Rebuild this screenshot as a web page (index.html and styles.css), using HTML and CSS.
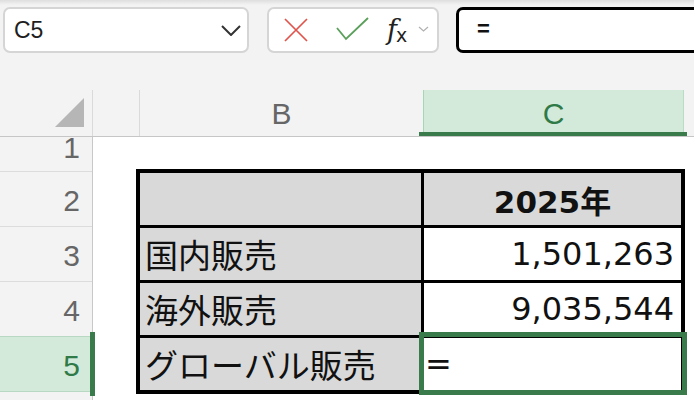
FILE: index.html
```html
<!DOCTYPE html>
<html lang="ja">
<head>
<meta charset="utf-8">
<link rel="stylesheet" href="styles.css">
</head>
<body>
<div class="toolbar">
  <div class="namebox">
    <span class="ref">C5</span>
    <svg class="chev" width="20" height="11" viewBox="0 0 20 11"><polyline points="1,1 10,10 19,1" fill="none" stroke="#333" stroke-width="2"/></svg>
  </div>
  <div class="fnbox">
    <svg class="icon-x" width="24" height="24" viewBox="0 0 24 24"><path d="M1 1 L23 23 M23 1 L1 23" stroke="#e0544c" stroke-width="1.7" fill="none"/></svg>
    <svg class="icon-ok" width="33" height="24" viewBox="0 0 33 24"><polyline points="1,11 10,22 32,1" fill="none" stroke="#5a9f5a" stroke-width="1.8"/></svg>
    <span class="fx"><i>f</i><span class="fx-x">x</span></span>
    <svg class="chev-sm" width="11" height="6" viewBox="0 0 11 6"><polyline points="1,1 5.5,5 10,1" fill="none" stroke="#b0b0b0" stroke-width="1.2"/></svg>
  </div>
  <div class="formula">=</div>
</div>
<div class="colheads">
  <div class="corner"><svg width="29" height="29" viewBox="0 0 29 29"><polygon points="29,0 29,29 0,29" fill="#b6b6b6"/></svg></div>
  <div class="colhead col-a"></div>
  <div class="colhead col-b">B</div>
  <div class="colhead col-c">C<span class="selbar"></span></div>
  <div class="colhead col-rest"></div>
</div>
<div class="sheet">
  <div class="rowheads">
    <div class="rowhead row-1">1</div>
    <div class="rowhead">2</div>
    <div class="rowhead">3</div>
    <div class="rowhead row-4">4</div>
    <div class="rowhead row-sel">5<span class="rowbar"></span></div>
  </div>
  <div class="cells">
    <div class="table">
      <div class="cell label"></div>
      <div class="cell year">2025年</div>
      <div class="cell label">国内販売</div>
      <div class="cell num">1,501,263</div>
      <div class="cell label">海外販売</div>
      <div class="cell num">9,035,544</div>
      <div class="cell label">グローバル販売</div>
      <div class="cell active">=<span class="selection"></span></div>
    </div>
  </div>
</div>
</body>
</html>
```
FILE: styles.css
```css
* { box-sizing: border-box; }
html, body { margin: 0; padding: 0; }
body {
  width: 694px;
  height: 400px;
  overflow: hidden;
  background: #f3f3f3;
  font-family: "Liberation Sans", Arial, sans-serif;
}
.toolbar {
  height: 90px;
  padding: 7px 0 0 3px;
  display: flex;
  align-items: flex-start;
  background: linear-gradient(#dedede, #f3f3f3 5px);
}
.namebox {
  width: 246px;
  height: 46px;
  flex: none;
  background: #fff;
  border: 2px solid #d5d5d5;
  border-radius: 7px;
  display: flex;
  align-items: center;
  justify-content: space-between;
  padding: 0 6px 0 9px;
}
.ref {
  font-size: 23px;
  color: #1e1e1e;
}
.chev { margin-top: 1px; }
.fnbox {
  margin-left: 18px;
  width: 172px;
  height: 46px;
  flex: none;
  background: #fff;
  border: 2px solid #d5d5d5;
  border-radius: 7px;
  display: flex;
  align-items: center;
  padding-left: 15px;
}
.icon-ok { margin-left: 28px; margin-top: -3px; }
.fx {
  margin-left: 18px;
  font-family: "DejaVu Serif", serif;
  color: #222;
  display: flex;
  align-items: baseline;
  line-height: 1;
  margin-top: -2px;
}
.fx i { font-size: 27px; font-style: italic; }
.fx-x { font-size: 19px; font-family: "DejaVu Sans", sans-serif; margin-left: -1px; position: relative; top: 3px; }
.chev-sm { margin-left: 11px; margin-top: -2px; }
.formula {
  margin-left: 17px;
  width: 260px;
  height: 46px;
  flex: none;
  background: #fff;
  border: 3px solid #000;
  border-radius: 7px;
  padding-left: 18px;
  font-size: 22px;
  line-height: 38px;
  color: #111;
  font-weight: bold;
}
.colheads {
  height: 47px;
  display: flex;
  border-bottom: 1px solid #c6c6c6;
}
.corner {
  width: 93px;
  flex: none;
  border-right: 1px solid #dadada;
  display: flex;
  justify-content: flex-end;
  align-items: flex-end;
  padding: 0 8px 9px 0;
}
.colhead {
  flex: none;
  font-size: 30px;
  color: #666;
  text-align: center;
  line-height: 47px;
}
.col-a { width: 47px; border-right: 1px solid #dadada; }
.col-b { width: 283px; }
.col-c {
  width: 261px;
  position: relative;
  background: #d3eadb;
  border-left: 1px solid #a9d5b7;
  border-right: 1px solid #b9dcc4;
  color: #2f7a47;
}
.col-rest { flex: 1; }
.selbar {
  position: absolute;
  left: -5px;
  right: -4px;
  bottom: 0;
  height: 4px;
  background: #3a7b4b;
}
.sheet {
  display: flex;
  height: 263px;
}
.rowheads {
  width: 93px;
  flex: none;
  border-right: 1px solid #c8c8c8;
}
.rowhead {
  height: 55px;
  border-bottom: 1px solid #dcdcdc;
  text-align: right;
  padding: 4px 12px 0 0;
  font-size: 30px;
  line-height: 50px;
  color: #666;
  position: relative;
}
.row-1 {
  height: 35px;
  padding: 0 12px 0 0;
  line-height: 21px;
}
.row-4 { border-bottom-color: #b9d8c3; }
.row-sel {
  background: #d3eadb;
  color: #2f7a47;
  border-bottom-color: #b9d8c3;
}
.rowbar {
  position: absolute;
  right: -3px;
  top: -5px;
  bottom: -5px;
  width: 5px;
  background: #3a7b4b;
}
.cells {
  flex: 1;
  background: #fff;
  padding: 32px 0 0 43px;
}
.table {
  display: inline-grid;
  grid-template-columns: 281px 257px;
  grid-template-rows: repeat(4, 52px);
  gap: 3px;
  background: #000;
  border: 4px solid #000;
  font-family: "DejaVu Sans", "Noto Sans CJK JP", sans-serif;
  font-size: 32px;
  color: #111;
}
.cell {
  background: #d9d9d9;
  display: flex;
  align-items: center;
  white-space: nowrap;
}
.label { padding-left: 5px; font-size: 33px; }
.year {
  justify-content: center;
  font-weight: bold;
  font-size: 31px;
}
.num {
  background: #fff;
  justify-content: flex-end;
  padding-right: 7px;
}
.active {
  background: #fff;
  position: relative;
  padding-left: 1px;
}
.selection {
  position: absolute;
  left: -5px;
  top: -6px;
  right: -6px;
  bottom: -5px;
  border: 5px solid #3a7b4b;
}
```
